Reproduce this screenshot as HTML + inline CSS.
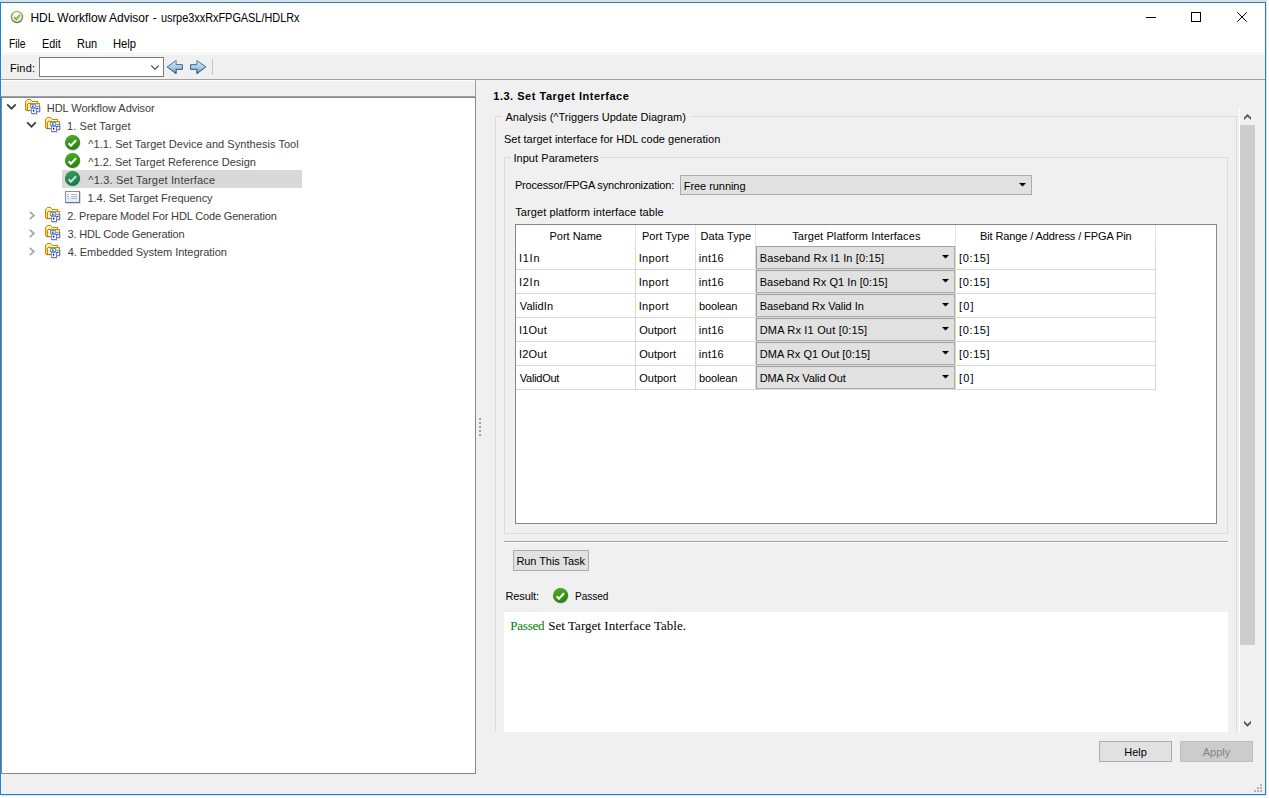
<!DOCTYPE html>
<html lang="en"><head><meta charset="utf-8"><title>HDL Workflow Advisor</title>
<style>
html,body{margin:0;padding:0}
body{width:1269px;height:798px;overflow:hidden;background:#fff;position:relative;font:11px "Liberation Sans",sans-serif;color:#000}
div,span,svg{position:absolute;box-sizing:border-box}
.t{white-space:pre;line-height:normal}
.s11{font:11px "Liberation Sans",sans-serif}
.s12{font:12px "Liberation Sans",sans-serif}
.b11{font:bold 11px "Liberation Sans",sans-serif}
.r13{font:13px "Liberation Serif",serif}
#topstrip{left:0;top:0;width:1267px;height:2px;background:#dedede}
#win{left:0;top:2px;width:1266px;height:793px;border:1px solid #1883d7;background:#fff}
#shadowr{left:1266px;top:3px;width:1px;height:793px;background:#e4e0dc}
#shadowb{left:1px;top:795px;width:1266px;height:1px;background:#e4e0dc}
#client{left:1px;top:54px;width:1264px;height:740px;background:#f0f0f0}
.hl{height:1px}
.vl{width:1px}
.combo{background:#e1e1e1;border:1px solid #adadad}
.btn{background:#e1e1e1;border:1px solid #adadad}
.gb{border:1px solid #dcdcdc}
.cellcombo{left:756px;width:199px;height:23px;background:#e1e1e1;border:1px solid #adadad;border-top-color:#a0a0a0;border-left-color:#a0a0a0}
.rowline{left:516px;width:640px;height:1px;background:#d8d8d8}
.colline{top:225px;width:1px;height:164px;background:linear-gradient(#e5e5e5,#e5e5e5 21px,#d8d8d8 21px)}
.sm{font:11.5px "Liberation Sans",sans-serif}
.grp{left:0;top:0;width:0;height:0}

</style></head>
<body>
<div id="topstrip"></div>
<div id="win"></div>
<div id="shadowr"></div><div id="shadowb"></div>
<div class="grp" id="titlebar">
<!-- title bar icon -->
<svg style="left:10px;top:10px" width="14" height="14" viewBox="0 0 14 14">
  <defs><radialGradient id="tg" cx="0.4" cy="0.35" r="0.7"><stop offset="0" stop-color="#ffffff"/><stop offset="1" stop-color="#d0d0d0"/></radialGradient><linearGradient id="tgs" x1="0" y1="0" x2="0" y2="1"><stop offset="0" stop-color="#93c266"/><stop offset="1" stop-color="#5c8439"/></linearGradient></defs>
  <circle cx="7" cy="7" r="5.6" fill="url(#tg)" stroke="url(#tgs)" stroke-width="1.3"/>
  <path d="M4.2 7.2 L6.2 9.3 L9.6 4.9" fill="none" stroke="#7ab03c" stroke-width="1.7"/>
</svg>
<!-- window controls -->
<svg style="left:1140px;top:8px" width="115" height="20" viewBox="0 0 115 20">
  <path d="M6 9.5H16" stroke="#000" stroke-width="1"/>
  <rect x="51.5" y="4.5" width="9" height="9" fill="none" stroke="#000" stroke-width="1"/>
  <path d="M97.2 4.2 L106.8 13.8 M106.8 4.2 L97.2 13.8" stroke="#000" stroke-width="1"/>
</svg>
<span class="t s12" style="left:30.42px;top:11px;letter-spacing:-0.006px;color:#000;">HDL Workflow Advisor</span>
<span class="t s12" style="left:152.67px;top:11px;color:#000;">-</span>
<span class="t s12" style="left:160.79px;top:11px;color:#000;transform:scaleX(0.9071);transform-origin:0 0;">usrpe3xxRxFPGASL/HDLRx</span>
</div>
<div id="client"></div>
<div class="hl" style="left:1px;top:53px;width:1264px;background:#f3f3f3"></div>
<div class="hl" style="left:1px;top:54px;width:1264px;background:#fdfdfd"></div>
<div class="grp" id="menubar">
<span class="t s12" style="left:9.36px;top:37px;color:#000;transform:scaleX(0.8527);transform-origin:0 0;">File</span>
<span class="t s12" style="left:41.91px;top:37px;color:#000;transform:scaleX(0.9024);transform-origin:0 0;">Edit</span>
<span class="t s12" style="left:76.80px;top:37px;color:#000;transform:scaleX(0.9135);transform-origin:0 0;">Run</span>
<span class="t s12" style="left:112.78px;top:37px;color:#000;transform:scaleX(0.9354);transform-origin:0 0;">Help</span>
</div>
<div class="grp" id="toolbar">
<!-- toolbar -->
<div style="left:39px;top:57px;width:125px;height:20px;background:#fff;border:1px solid #7a7a7a"></div>
<svg style="left:149px;top:62px" width="12" height="10" viewBox="0 0 12 10"><path d="M2.3 3.6 L6 7.3 L9.7 3.6" fill="none" stroke="#333" stroke-width="1.1"/></svg>
<svg style="left:166px;top:59px" width="18" height="16" viewBox="0 0 18 16">
  <defs><linearGradient id="ag" x1="0" y1="0" x2="0" y2="1"><stop offset="0" stop-color="#e3f0fa"/><stop offset="0.5" stop-color="#a9cbe8"/><stop offset="1" stop-color="#6fa5d2"/></linearGradient>
  <linearGradient id="as" x1="0" y1="0" x2="0" y2="1"><stop offset="0" stop-color="#4f8bbd"/><stop offset="1" stop-color="#15365c"/></linearGradient></defs>
  <path d="M1.1 8 L10.1 1.4 V5.6 H16.4 V10.3 H10.1 V14.6 Z" fill="url(#ag)" stroke="url(#as)" stroke-width="1" stroke-linejoin="miter"/>
</svg>
<svg style="left:188px;top:59px" width="19" height="16" viewBox="0 0 19 16">
  <path d="M17.9 8 L8.9 1.4 V5.6 H2.6 V10.3 H8.9 V14.6 Z" fill="url(#ag)" stroke="url(#as)" stroke-width="1" stroke-linejoin="miter"/>
</svg>
<div class="vl" style="left:212px;top:59px;height:16px;background:#c4c4c4"></div>
<div class="hl" style="left:1px;top:79px;width:1264px;background:#a0a0a0"></div>
<span class="t s11" style="left:9.90px;top:62px;letter-spacing:0.159px;">Find:</span>
</div>
<div class="grp" id="treepanel">
<!-- left panel -->
<div class="hl" style="left:1px;top:80px;width:474px;background:#fff"></div>
<div class="vl" style="left:475px;top:80px;height:17px;background:#a0a0a0"></div>
<div class="hl" style="left:1px;top:96px;width:475px;background:#a0a0a0"></div>
<div style="left:1px;top:97px;width:475px;height:677px;background:#fff;border:1px solid #828790"></div>
<div style="left:62px;top:170px;width:240px;height:18px;background:#d9d9d9"></div>
<svg style="left:6px;top:103px" width="11" height="8" viewBox="0 0 11 8"><path d="M1.2 1.4 L5.5 5.7 L9.8 1.4" fill="none" stroke="#404040" stroke-width="1.8"/></svg>
<svg style="left:25px;top:98px" width="16" height="17" viewBox="0 0 16 17" shape-rendering="crispEdges"><rect x="2" y="2" width="4" height="1" fill="#fffae0"/><rect x="1" y="3" width="6" height="1" fill="#ffee90"/><rect x="1" y="4" width="6" height="1" fill="#ffe878"/><rect x="7" y="4" width="5" height="1" fill="#fffdf2"/><rect x="1" y="5" width="2" height="1" fill="#ffe070"/><rect x="1" y="6" width="1" height="6" fill="#ffd452"/><rect x="3" y="6" width="11" height="1" fill="#fffbe6"/><rect x="3" y="7" width="3" height="5" fill="#fff3a6"/><rect x="11" y="6" width="3" height="2" fill="#ffe680"/><rect x="2" y="1" width="4" height="1" fill="#c98a12"/><rect x="1" y="2" width="1" height="1" fill="#c98a12"/><rect x="6" y="2" width="1" height="1" fill="#c98a12"/><rect x="0" y="3" width="1" height="9" fill="#c98a12"/><rect x="7" y="3" width="6" height="1" fill="#c98a12"/><rect x="12" y="4" width="1" height="1" fill="#c98a12"/><rect x="3" y="5" width="12" height="1" fill="#c98a12"/><rect x="2" y="6" width="1" height="6" fill="#c98a12"/><rect x="14" y="6" width="1" height="2" fill="#c98a12"/><rect x="1" y="12" width="5" height="1" fill="#b87808"/><rect x="2" y="13" width="4" height="1" fill="#dfe8f8"/><rect x="15" y="8" width="1" height="6" fill="#c9d2ee"/><rect x="7" y="16" width="6" height="1" fill="#d4daf0"/><rect x="12" y="14" width="3" height="1" fill="#c9d2ee"/><rect x="5" y="6" width="6" height="4" fill="#7096e0"/><rect x="6" y="7" width="4" height="2" fill="#f6f8ff"/><rect x="7" y="7.6" width="1.6" height="1.1" fill="#10108a" shape-rendering="auto"/><rect x="11" y="8" width="4" height="6" fill="#8a90cc"/><rect x="11" y="8" width="3" height="1" fill="#7fa2e6"/><rect x="11" y="9" width="3" height="4" fill="#f4f6ff"/><rect x="12" y="9.9" width="1.4" height="1" fill="#10108a" shape-rendering="auto"/><rect x="14" y="8" width="1" height="6" fill="#7878b8"/><rect x="6" y="10" width="6" height="6" fill="#7096e0"/><rect x="7" y="11" width="4" height="4" fill="#fbfcff"/><rect x="7.9" y="11.7" width="1.4" height="1.9" rx="0.4" fill="#00007f" shape-rendering="auto"/><rect x="11" y="10" width="1" height="6" fill="#7a7ab8"/><rect x="6" y="15" width="6" height="1" fill="#7a7ab8"/></svg>
<svg style="left:26px;top:121px" width="11" height="8" viewBox="0 0 11 8"><path d="M1.2 1.4 L5.5 5.7 L9.8 1.4" fill="none" stroke="#404040" stroke-width="1.8"/></svg>
<svg style="left:45px;top:116px" width="16" height="17" viewBox="0 0 16 17" shape-rendering="crispEdges"><rect x="2" y="2" width="4" height="1" fill="#fffae0"/><rect x="1" y="3" width="6" height="1" fill="#ffee90"/><rect x="1" y="4" width="6" height="1" fill="#ffe878"/><rect x="7" y="4" width="5" height="1" fill="#fffdf2"/><rect x="1" y="5" width="2" height="1" fill="#ffe070"/><rect x="1" y="6" width="1" height="6" fill="#ffd452"/><rect x="3" y="6" width="11" height="1" fill="#fffbe6"/><rect x="3" y="7" width="3" height="5" fill="#fff3a6"/><rect x="11" y="6" width="3" height="2" fill="#ffe680"/><rect x="2" y="1" width="4" height="1" fill="#c98a12"/><rect x="1" y="2" width="1" height="1" fill="#c98a12"/><rect x="6" y="2" width="1" height="1" fill="#c98a12"/><rect x="0" y="3" width="1" height="9" fill="#c98a12"/><rect x="7" y="3" width="6" height="1" fill="#c98a12"/><rect x="12" y="4" width="1" height="1" fill="#c98a12"/><rect x="3" y="5" width="12" height="1" fill="#c98a12"/><rect x="2" y="6" width="1" height="6" fill="#c98a12"/><rect x="14" y="6" width="1" height="2" fill="#c98a12"/><rect x="1" y="12" width="5" height="1" fill="#b87808"/><rect x="2" y="13" width="4" height="1" fill="#dfe8f8"/><rect x="15" y="8" width="1" height="6" fill="#c9d2ee"/><rect x="7" y="16" width="6" height="1" fill="#d4daf0"/><rect x="12" y="14" width="3" height="1" fill="#c9d2ee"/><rect x="5" y="6" width="6" height="4" fill="#7096e0"/><rect x="6" y="7" width="4" height="2" fill="#f6f8ff"/><rect x="7" y="7.6" width="1.6" height="1.1" fill="#10108a" shape-rendering="auto"/><rect x="11" y="8" width="4" height="6" fill="#8a90cc"/><rect x="11" y="8" width="3" height="1" fill="#7fa2e6"/><rect x="11" y="9" width="3" height="4" fill="#f4f6ff"/><rect x="12" y="9.9" width="1.4" height="1" fill="#10108a" shape-rendering="auto"/><rect x="14" y="8" width="1" height="6" fill="#7878b8"/><rect x="6" y="10" width="6" height="6" fill="#7096e0"/><rect x="7" y="11" width="4" height="4" fill="#fbfcff"/><rect x="7.9" y="11.7" width="1.4" height="1.9" rx="0.4" fill="#00007f" shape-rendering="auto"/><rect x="11" y="10" width="1" height="6" fill="#7a7ab8"/><rect x="6" y="15" width="6" height="1" fill="#7a7ab8"/></svg>
<svg style="left:65px;top:135px" width="17" height="17" viewBox="0 0 17 17">
<defs><linearGradient id="g1" x1="0" y1="0" x2="0.3" y2="1"><stop offset="0" stop-color="#4fb02a"/><stop offset="1" stop-color="#2b8410"/></linearGradient></defs>
<circle cx="8.1" cy="8.2" r="7.5" fill="#b8b8d8" opacity="0.55"/>
<circle cx="7.55" cy="7.5" r="7.6" fill="url(#g1)"/>
<path d="M3.7 8.3 L5.9 10.7 L11.1 5.2" fill="none" stroke="#ffffff" stroke-width="2.1"/>
</svg>
<svg style="left:65px;top:153px" width="17" height="17" viewBox="0 0 17 17">
<defs><linearGradient id="g2" x1="0" y1="0" x2="0.3" y2="1"><stop offset="0" stop-color="#4fb02a"/><stop offset="1" stop-color="#2b8410"/></linearGradient></defs>
<circle cx="8.1" cy="8.2" r="7.5" fill="#b8b8d8" opacity="0.55"/>
<circle cx="7.55" cy="7.5" r="7.6" fill="url(#g2)"/>
<path d="M3.7 8.3 L5.9 10.7 L11.1 5.2" fill="none" stroke="#ffffff" stroke-width="2.1"/>
</svg>
<svg style="left:65px;top:171px" width="17" height="17" viewBox="0 0 17 17">
<defs><linearGradient id="g3" x1="0" y1="0" x2="0.3" y2="1"><stop offset="0" stop-color="#35a05a"/><stop offset="1" stop-color="#1b7c42"/></linearGradient></defs>
<circle cx="8.1" cy="8.2" r="7.5" fill="#b8b8d8" opacity="0.55"/>
<circle cx="7.55" cy="7.5" r="7.6" fill="url(#g3)"/>
<path d="M3.7 8.3 L5.9 10.7 L11.1 5.2" fill="none" stroke="#b9dcf5" stroke-width="2.1"/>
</svg>
<svg style="left:65px;top:191px" width="17" height="14" viewBox="0 0 17 14">
<defs><linearGradient id="lg" x1="0" y1="0" x2="0" y2="1"><stop offset="0" stop-color="#ffffff"/><stop offset="1" stop-color="#dfeaf8"/></linearGradient></defs>
<rect x="1.2" y="1.2" width="14.6" height="11.6" fill="#a8b0d0" opacity="0.6"/>
<rect x="0.5" y="0.5" width="14" height="11" fill="url(#lg)" stroke="#7095e0" stroke-width="1"/>
<path d="M0.5 11.5 H14.5 V0.5" fill="none" stroke="#6d6fb0" stroke-width="1"/>
<path d="M2 3.5H4 M6 3.5H12 M2 5.5H4 M6 5.5H12 M2 7.5H4 M6 7.5H12" stroke="#b4b4b4" stroke-width="1"/>
</svg>
<svg style="left:28px;top:210px" width="8" height="11" viewBox="0 0 8 11"><path d="M1.8 1.8 L5.9 5.5 L1.8 9.2" fill="none" stroke="#a8a8a8" stroke-width="1.8"/></svg>
<svg style="left:45px;top:206px" width="16" height="17" viewBox="0 0 16 17" shape-rendering="crispEdges"><rect x="2" y="2" width="4" height="1" fill="#fffae0"/><rect x="1" y="3" width="6" height="1" fill="#ffee90"/><rect x="1" y="4" width="6" height="1" fill="#ffe878"/><rect x="7" y="4" width="5" height="1" fill="#fffdf2"/><rect x="1" y="5" width="2" height="1" fill="#ffe070"/><rect x="1" y="6" width="1" height="6" fill="#ffd452"/><rect x="3" y="6" width="11" height="1" fill="#fffbe6"/><rect x="3" y="7" width="3" height="5" fill="#fff3a6"/><rect x="11" y="6" width="3" height="2" fill="#ffe680"/><rect x="2" y="1" width="4" height="1" fill="#c98a12"/><rect x="1" y="2" width="1" height="1" fill="#c98a12"/><rect x="6" y="2" width="1" height="1" fill="#c98a12"/><rect x="0" y="3" width="1" height="9" fill="#c98a12"/><rect x="7" y="3" width="6" height="1" fill="#c98a12"/><rect x="12" y="4" width="1" height="1" fill="#c98a12"/><rect x="3" y="5" width="12" height="1" fill="#c98a12"/><rect x="2" y="6" width="1" height="6" fill="#c98a12"/><rect x="14" y="6" width="1" height="2" fill="#c98a12"/><rect x="1" y="12" width="5" height="1" fill="#b87808"/><rect x="2" y="13" width="4" height="1" fill="#dfe8f8"/><rect x="15" y="8" width="1" height="6" fill="#c9d2ee"/><rect x="7" y="16" width="6" height="1" fill="#d4daf0"/><rect x="12" y="14" width="3" height="1" fill="#c9d2ee"/><rect x="5" y="6" width="6" height="4" fill="#7096e0"/><rect x="6" y="7" width="4" height="2" fill="#f6f8ff"/><rect x="7" y="7.6" width="1.6" height="1.1" fill="#10108a" shape-rendering="auto"/><rect x="11" y="8" width="4" height="6" fill="#8a90cc"/><rect x="11" y="8" width="3" height="1" fill="#7fa2e6"/><rect x="11" y="9" width="3" height="4" fill="#f4f6ff"/><rect x="12" y="9.9" width="1.4" height="1" fill="#10108a" shape-rendering="auto"/><rect x="14" y="8" width="1" height="6" fill="#7878b8"/><rect x="6" y="10" width="6" height="6" fill="#7096e0"/><rect x="7" y="11" width="4" height="4" fill="#fbfcff"/><rect x="7.9" y="11.7" width="1.4" height="1.9" rx="0.4" fill="#00007f" shape-rendering="auto"/><rect x="11" y="10" width="1" height="6" fill="#7a7ab8"/><rect x="6" y="15" width="6" height="1" fill="#7a7ab8"/></svg>
<svg style="left:28px;top:228px" width="8" height="11" viewBox="0 0 8 11"><path d="M1.8 1.8 L5.9 5.5 L1.8 9.2" fill="none" stroke="#a8a8a8" stroke-width="1.8"/></svg>
<svg style="left:45px;top:224px" width="16" height="17" viewBox="0 0 16 17" shape-rendering="crispEdges"><rect x="2" y="2" width="4" height="1" fill="#fffae0"/><rect x="1" y="3" width="6" height="1" fill="#ffee90"/><rect x="1" y="4" width="6" height="1" fill="#ffe878"/><rect x="7" y="4" width="5" height="1" fill="#fffdf2"/><rect x="1" y="5" width="2" height="1" fill="#ffe070"/><rect x="1" y="6" width="1" height="6" fill="#ffd452"/><rect x="3" y="6" width="11" height="1" fill="#fffbe6"/><rect x="3" y="7" width="3" height="5" fill="#fff3a6"/><rect x="11" y="6" width="3" height="2" fill="#ffe680"/><rect x="2" y="1" width="4" height="1" fill="#c98a12"/><rect x="1" y="2" width="1" height="1" fill="#c98a12"/><rect x="6" y="2" width="1" height="1" fill="#c98a12"/><rect x="0" y="3" width="1" height="9" fill="#c98a12"/><rect x="7" y="3" width="6" height="1" fill="#c98a12"/><rect x="12" y="4" width="1" height="1" fill="#c98a12"/><rect x="3" y="5" width="12" height="1" fill="#c98a12"/><rect x="2" y="6" width="1" height="6" fill="#c98a12"/><rect x="14" y="6" width="1" height="2" fill="#c98a12"/><rect x="1" y="12" width="5" height="1" fill="#b87808"/><rect x="2" y="13" width="4" height="1" fill="#dfe8f8"/><rect x="15" y="8" width="1" height="6" fill="#c9d2ee"/><rect x="7" y="16" width="6" height="1" fill="#d4daf0"/><rect x="12" y="14" width="3" height="1" fill="#c9d2ee"/><rect x="5" y="6" width="6" height="4" fill="#7096e0"/><rect x="6" y="7" width="4" height="2" fill="#f6f8ff"/><rect x="7" y="7.6" width="1.6" height="1.1" fill="#10108a" shape-rendering="auto"/><rect x="11" y="8" width="4" height="6" fill="#8a90cc"/><rect x="11" y="8" width="3" height="1" fill="#7fa2e6"/><rect x="11" y="9" width="3" height="4" fill="#f4f6ff"/><rect x="12" y="9.9" width="1.4" height="1" fill="#10108a" shape-rendering="auto"/><rect x="14" y="8" width="1" height="6" fill="#7878b8"/><rect x="6" y="10" width="6" height="6" fill="#7096e0"/><rect x="7" y="11" width="4" height="4" fill="#fbfcff"/><rect x="7.9" y="11.7" width="1.4" height="1.9" rx="0.4" fill="#00007f" shape-rendering="auto"/><rect x="11" y="10" width="1" height="6" fill="#7a7ab8"/><rect x="6" y="15" width="6" height="1" fill="#7a7ab8"/></svg>
<svg style="left:28px;top:246px" width="8" height="11" viewBox="0 0 8 11"><path d="M1.8 1.8 L5.9 5.5 L1.8 9.2" fill="none" stroke="#a8a8a8" stroke-width="1.8"/></svg>
<svg style="left:45px;top:242px" width="16" height="17" viewBox="0 0 16 17" shape-rendering="crispEdges"><rect x="2" y="2" width="4" height="1" fill="#fffae0"/><rect x="1" y="3" width="6" height="1" fill="#ffee90"/><rect x="1" y="4" width="6" height="1" fill="#ffe878"/><rect x="7" y="4" width="5" height="1" fill="#fffdf2"/><rect x="1" y="5" width="2" height="1" fill="#ffe070"/><rect x="1" y="6" width="1" height="6" fill="#ffd452"/><rect x="3" y="6" width="11" height="1" fill="#fffbe6"/><rect x="3" y="7" width="3" height="5" fill="#fff3a6"/><rect x="11" y="6" width="3" height="2" fill="#ffe680"/><rect x="2" y="1" width="4" height="1" fill="#c98a12"/><rect x="1" y="2" width="1" height="1" fill="#c98a12"/><rect x="6" y="2" width="1" height="1" fill="#c98a12"/><rect x="0" y="3" width="1" height="9" fill="#c98a12"/><rect x="7" y="3" width="6" height="1" fill="#c98a12"/><rect x="12" y="4" width="1" height="1" fill="#c98a12"/><rect x="3" y="5" width="12" height="1" fill="#c98a12"/><rect x="2" y="6" width="1" height="6" fill="#c98a12"/><rect x="14" y="6" width="1" height="2" fill="#c98a12"/><rect x="1" y="12" width="5" height="1" fill="#b87808"/><rect x="2" y="13" width="4" height="1" fill="#dfe8f8"/><rect x="15" y="8" width="1" height="6" fill="#c9d2ee"/><rect x="7" y="16" width="6" height="1" fill="#d4daf0"/><rect x="12" y="14" width="3" height="1" fill="#c9d2ee"/><rect x="5" y="6" width="6" height="4" fill="#7096e0"/><rect x="6" y="7" width="4" height="2" fill="#f6f8ff"/><rect x="7" y="7.6" width="1.6" height="1.1" fill="#10108a" shape-rendering="auto"/><rect x="11" y="8" width="4" height="6" fill="#8a90cc"/><rect x="11" y="8" width="3" height="1" fill="#7fa2e6"/><rect x="11" y="9" width="3" height="4" fill="#f4f6ff"/><rect x="12" y="9.9" width="1.4" height="1" fill="#10108a" shape-rendering="auto"/><rect x="14" y="8" width="1" height="6" fill="#7878b8"/><rect x="6" y="10" width="6" height="6" fill="#7096e0"/><rect x="7" y="11" width="4" height="4" fill="#fbfcff"/><rect x="7.9" y="11.7" width="1.4" height="1.9" rx="0.4" fill="#00007f" shape-rendering="auto"/><rect x="11" y="10" width="1" height="6" fill="#7a7ab8"/><rect x="6" y="15" width="6" height="1" fill="#7a7ab8"/></svg>
<span class="t s11" style="left:46.80px;top:102px;letter-spacing:-0.044px;color:#3c3c3c;">HDL Workflow Advisor</span>
<span class="t s11" style="left:67.06px;top:120px;letter-spacing:0.104px;color:#3c3c3c;">1. Set Target</span>
<span class="t s11" style="left:88.35px;top:138px;letter-spacing:0.049px;color:#3c3c3c;">^1.1. Set Target Device and Synthesis Tool</span>
<span class="t s11" style="left:88.35px;top:156px;color:#3c3c3c;">^1.2. Set Target Reference Design</span>
<span class="t s11" style="left:88.35px;top:174px;letter-spacing:0.175px;color:#3c3c3c;">^1.3. Set Target Interface</span>
<span class="t s11" style="left:87.56px;top:192px;letter-spacing:-0.055px;color:#3c3c3c;">1.4. Set Target Frequency</span>
<span class="t s11" style="left:67.35px;top:210px;letter-spacing:-0.153px;color:#3c3c3c;">2. Prepare Model For HDL Code Generation</span>
<span class="t s11" style="left:67.48px;top:228px;letter-spacing:-0.164px;color:#3c3c3c;">3. HDL Code Generation</span>
<span class="t s11" style="left:67.65px;top:246px;letter-spacing:-0.033px;color:#3c3c3c;">4. Embedded System Integration</span>
</div>
<!-- splitter dots -->
<div style="left:479px;top:418px;width:2px;height:2px;background:#a0a0a0;box-shadow:0 4px #a0a0a0,0 8px #a0a0a0,0 12px #a0a0a0,0 16px #a0a0a0"></div>
<div class="grp" id="taskpanel">
<!-- right panel -->
<div class="gb" style="left:495px;top:116px;width:742px;height:616px;border-bottom:none"></div>
<div class="gb" style="left:504px;top:157px;width:724px;height:377px"></div>
<div class="combo" style="left:680px;top:175px;width:352px;height:20px"></div>
<svg style="left:1019px;top:183px" width="7" height="4" viewBox="0 0 7 4"><path d="M0 0H7L3.5 3.6Z" fill="#000"/></svg>
<!-- table -->
<div style="left:515px;top:224px;width:702px;height:300px;background:#fff;border:1px solid #828790"></div>
<div class="colline" style="left:635px"></div>
<div class="colline" style="left:695px"></div>
<div class="colline" style="left:755px"></div>
<div class="colline" style="left:955px"></div>
<div class="colline" style="left:1155px"></div>
<div class="rowline" style="top:269px"></div>
<div class="rowline" style="top:293px"></div>
<div class="rowline" style="top:317px"></div>
<div class="rowline" style="top:341px"></div>
<div class="rowline" style="top:365px"></div>
<div class="rowline" style="top:389px"></div>
<div class="cellcombo" style="top:246px"></div><svg style="left:942px;top:255px" width="7" height="4" viewBox="0 0 7 4"><path d="M0 0H7L3.5 3.6Z" fill="#000"/></svg>
<div class="cellcombo" style="top:270px"></div><svg style="left:942px;top:279px" width="7" height="4" viewBox="0 0 7 4"><path d="M0 0H7L3.5 3.6Z" fill="#000"/></svg>
<div class="cellcombo" style="top:294px"></div><svg style="left:942px;top:303px" width="7" height="4" viewBox="0 0 7 4"><path d="M0 0H7L3.5 3.6Z" fill="#000"/></svg>
<div class="cellcombo" style="top:318px"></div><svg style="left:942px;top:327px" width="7" height="4" viewBox="0 0 7 4"><path d="M0 0H7L3.5 3.6Z" fill="#000"/></svg>
<div class="cellcombo" style="top:342px"></div><svg style="left:942px;top:351px" width="7" height="4" viewBox="0 0 7 4"><path d="M0 0H7L3.5 3.6Z" fill="#000"/></svg>
<div class="cellcombo" style="top:366px"></div><svg style="left:942px;top:375px" width="7" height="4" viewBox="0 0 7 4"><path d="M0 0H7L3.5 3.6Z" fill="#000"/></svg>
<!-- separator line -->
<div class="hl" style="left:504px;top:541px;width:724px;background:#a0a0a0"></div>
<div class="hl" style="left:504px;top:542px;width:724px;background:#fff"></div>
<div class="btn" style="left:513px;top:550px;width:76px;height:21px"></div>
<svg style="left:553px;top:588px" width="17" height="17" viewBox="0 0 17 17">
<defs><linearGradient id="g4" x1="0" y1="0" x2="0.3" y2="1"><stop offset="0" stop-color="#4fb02a"/><stop offset="1" stop-color="#2b8410"/></linearGradient></defs>
<circle cx="8.1" cy="8.2" r="7.5" fill="#b8b8d8" opacity="0.55"/>
<circle cx="7.55" cy="7.5" r="7.6" fill="url(#g4)"/>
<path d="M3.7 8.3 L5.9 10.7 L11.1 5.2" fill="none" stroke="#ffffff" stroke-width="2.1"/>
</svg>
<div style="left:504px;top:612px;width:724px;height:120px;background:#fff"></div>
<span class="t b11" style="left:493.31px;top:90px;letter-spacing:0.511px;">1.3. Set Target Interface</span>
<span class="t s11" style="left:505.38px;top:111px;letter-spacing:0.027px;background:#f0f0f0;padding:0 5px 0 3px;margin-left:-3px;">Analysis (^Triggers Update Diagram)</span>
<span class="t s11" style="left:503.90px;top:133px;letter-spacing:0.022px;">Set target interface for HDL code generation</span>
<span class="t s11" style="left:513.38px;top:152px;letter-spacing:0.056px;background:#f0f0f0;padding:0 1px 0 3px;margin-left:-3px;">Input Parameters</span>
<span class="t s11" style="left:514.90px;top:179px;letter-spacing:-0.169px;">Processor/FPGA synchronization:</span>
<span class="t s11" style="left:683.80px;top:180px;letter-spacing:-0.060px;">Free running</span>
<span class="t s11" style="left:515.25px;top:206px;letter-spacing:0.097px;">Target platform interface table</span>
<span class="t s11" style="left:549.50px;top:230px;letter-spacing:-0.011px;">Port Name</span>
<span class="t s11" style="left:641.90px;top:230px;letter-spacing:0.088px;">Port Type</span>
<span class="t s11" style="left:700.50px;top:230px;letter-spacing:0.080px;">Data Type</span>
<span class="t s11" style="left:792.15px;top:230px;letter-spacing:0.092px;">Target Platform Interfaces</span>
<span class="t s11" style="left:979.90px;top:230px;letter-spacing:-0.099px;">Bit Range / Address / FPGA Pin</span>
<span class="t s11" style="left:518.88px;top:252px;letter-spacing:0.757px;">I1In</span>
<span class="t s11" style="left:638.68px;top:252px;letter-spacing:0.371px;">Inport</span>
<span class="t s11" style="left:698.86px;top:252px;letter-spacing:0.240px;">int16</span>
<span class="t s11" style="left:759.70px;top:252px;letter-spacing:0.143px;">Baseband Rx I1 In [0:15]</span>
<span class="t s11" style="left:959.02px;top:252px;letter-spacing:0.627px;">[0:15]</span>
<span class="t s11" style="left:518.88px;top:276px;letter-spacing:0.757px;">I2In</span>
<span class="t s11" style="left:638.68px;top:276px;letter-spacing:0.371px;">Inport</span>
<span class="t s11" style="left:698.86px;top:276px;letter-spacing:0.240px;">int16</span>
<span class="t s11" style="left:759.70px;top:276px;letter-spacing:0.056px;">Baseband Rx Q1 In [0:15]</span>
<span class="t s11" style="left:959.02px;top:276px;letter-spacing:0.627px;">[0:15]</span>
<span class="t s11" style="left:519.85px;top:300px;letter-spacing:0.056px;">ValidIn</span>
<span class="t s11" style="left:638.68px;top:300px;letter-spacing:0.371px;">Inport</span>
<span class="t s11" style="left:698.89px;top:300px;letter-spacing:-0.105px;">boolean</span>
<span class="t s11" style="left:759.70px;top:300px;letter-spacing:-0.046px;">Baseband Rx Valid In</span>
<span class="t s11" style="left:959.02px;top:300px;letter-spacing:1.167px;">[0]</span>
<span class="t s11" style="left:518.88px;top:324px;letter-spacing:0.247px;">I1Out</span>
<span class="t s11" style="left:639.18px;top:324px;letter-spacing:0.019px;">Outport</span>
<span class="t s11" style="left:698.86px;top:324px;letter-spacing:0.240px;">int16</span>
<span class="t s11" style="left:759.70px;top:324px;letter-spacing:0.182px;">DMA Rx I1 Out [0:15]</span>
<span class="t s11" style="left:959.02px;top:324px;letter-spacing:0.627px;">[0:15]</span>
<span class="t s11" style="left:518.88px;top:348px;letter-spacing:0.247px;">I2Out</span>
<span class="t s11" style="left:639.18px;top:348px;letter-spacing:0.019px;">Outport</span>
<span class="t s11" style="left:698.86px;top:348px;letter-spacing:0.240px;">int16</span>
<span class="t s11" style="left:759.70px;top:348px;letter-spacing:0.055px;">DMA Rx Q1 Out [0:15]</span>
<span class="t s11" style="left:959.02px;top:348px;letter-spacing:0.627px;">[0:15]</span>
<span class="t s11" style="left:519.85px;top:372px;letter-spacing:-0.264px;">ValidOut</span>
<span class="t s11" style="left:639.18px;top:372px;letter-spacing:0.019px;">Outport</span>
<span class="t s11" style="left:698.89px;top:372px;letter-spacing:-0.105px;">boolean</span>
<span class="t s11" style="left:759.70px;top:372px;letter-spacing:-0.110px;">DMA Rx Valid Out</span>
<span class="t s11" style="left:959.02px;top:372px;letter-spacing:1.167px;">[0]</span>
<span class="t s11" style="left:516.40px;top:555px;letter-spacing:-0.059px;">Run This Task</span>
<span class="t s11" style="left:505.50px;top:590px;letter-spacing:-0.124px;">Result:</span>
<span class="t s11" style="left:575.28px;top:590px;transform:scaleX(0.9090);transform-origin:0 0;">Passed</span>
<span class="t r13" style="left:510.33px;top:618px;letter-spacing:-0.231px;color:#008000;">Passed</span>
<span class="t r13" style="left:548.23px;top:618px;letter-spacing:0.040px;">Set Target Interface Table.</span>
</div>
<!-- scrollbar -->
<div class="vl" style="left:1239px;top:108px;height:624px;background:#fff"></div>
<div style="left:1240px;top:125px;width:15px;height:520px;background:#cdcdcd"></div>
<svg style="left:1240px;top:108px" width="15" height="17" viewBox="0 0 15 17"><path d="M4 9.6 L7.5 6 L11 9.6 V12 L7.5 8.5 L4 12 Z" fill="#505050"/></svg>
<svg style="left:1240px;top:715px" width="15" height="17" viewBox="0 0 15 17"><path d="M4 5.8 V8.2 L7.5 11.8 L11 8.2 V5.8 L7.5 9.3 Z" fill="#505050"/></svg>
<div class="grp" id="buttons">
<!-- bottom buttons -->
<div class="btn" style="left:1099px;top:741px;width:73px;height:21px"></div>
<div style="left:1180px;top:741px;width:73px;height:21px;background:#cccccc;border:1px solid #bfbfbf"></div>
<span class="t s11" style="left:1124.19px;top:746px;">Help</span>
<span class="t s11" style="left:1202.73px;top:746px;color:#838383;">Apply</span>
</div>
<!-- grip -->
<div style="left:1260px;top:784px;width:2px;height:2px;background:#b4b4b4;box-shadow:0 3px #b4b4b4,0 6px #b4b4b4,-3px 3px #b4b4b4,-3px 6px #b4b4b4,-6px 6px #b4b4b4"></div>

</body></html>
